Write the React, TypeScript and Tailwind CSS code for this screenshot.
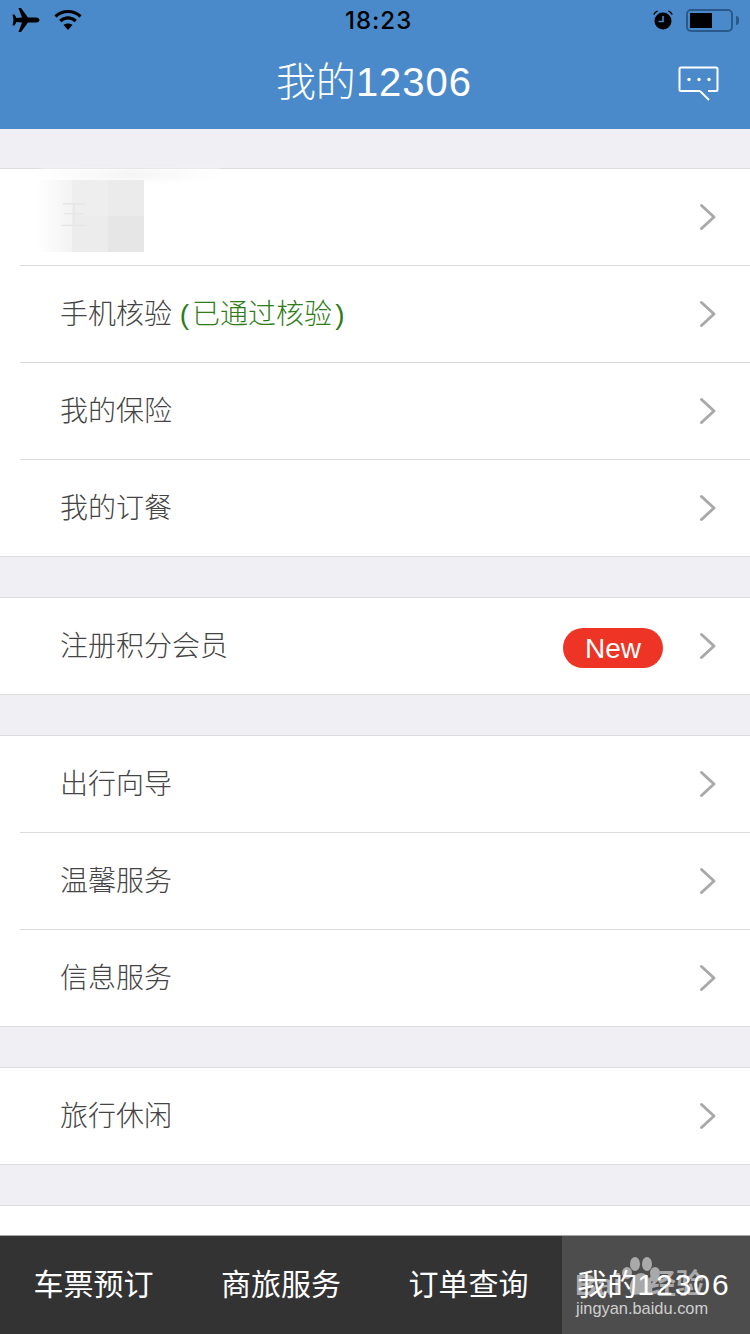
const sans = "font-['Liberation_Sans','Noto_Sans_CJK_SC',sans-serif]";

function Chevron() {
  return (
    <svg width="18" height="28" viewBox="0 0 18 28" fill="none" className="shrink-0">
      <path d="M2.5 2.5 L15 14 L2.5 25.5" stroke="#a9a9a9" strokeWidth="3" strokeLinecap="round" strokeLinejoin="round" />
    </svg>
  );
}

function Row({ children, last, right }: { children?: React.ReactNode; last?: boolean; right?: React.ReactNode }) {
  return (
    <div className="pl-5">
      <div className={`flex items-center pr-[33px] ${last ? 'h-[96px]' : 'h-[97px] border-b border-[#dcdcdc]'}`}>
        <div className="flex-1 pl-[40px] pt-[1px] text-[28px] leading-[40px] font-light text-[#444444]">{children}</div>
        {right}
        <Chevron />
      </div>
    </div>
  );
}

function Group({ children }: { children: React.ReactNode }) {
  return <div className="mb-10 border-y border-[#dcdcdc] bg-white">{children}</div>;
}

function BlurredName() {
  return (
    <div className="relative h-[96px]">
      <div className="absolute left-[40px] top-0 h-[11px] w-[180px] bg-gradient-to-r from-white via-[#f5f5f5] to-white blur-[2px]" />
      <div className="absolute left-[36px] top-[11px] h-[72px] w-[36px] bg-gradient-to-r from-white to-[#f3f3f3]" />
      <div className="absolute left-[72px] top-[11px] grid h-[72px] w-[72px] grid-cols-2 grid-rows-2">
        <div className="bg-[#eeeeee]" />
        <div className="bg-[#ebebeb]" />
        <div className="bg-[#ececec]" />
        <div className="bg-[#e6e6e6]" />
      </div>
      <span className="absolute left-[60px] top-[27px] text-[28px] leading-[40px] font-light text-[#e6e6e6] blur-[0.6px]">王</span>
    </div>
  );
}

function StatusBar() {
  return (
    <div className="relative flex h-[40px] items-center justify-between pl-3 pr-[11px] text-black">
      <div className="flex items-center gap-[14px]">
        <svg width="28" height="26" viewBox="0 0 28 26" fill="currentColor">
          <path d="M6.5 1 L9 1 L16 10.5 L24 10.5 C26.5 10.5 27.5 12 27.5 13 C27.5 14 26.5 15.5 24 15.5 L16 15.5 L9 25 L6.5 25 L10 15.5 L4.5 15 L2.5 18.5 L0.5 18.5 L1.5 13 L0.5 7.5 L2.5 7.5 L4.5 11 L10 10.5 Z" />
        </svg>
        <svg width="28" height="22" viewBox="0 0 28 22" fill="none" stroke="currentColor" strokeWidth="3.2">
          <path d="M1.5 7.5 C8.5 0.8 19.5 0.8 26.5 7.5" />
          <path d="M6.2 12 C10.8 7.8 17.2 7.8 21.8 12" />
          <path d="M14 21 L9.5 16 C12 14 16 14 18.5 16 Z" fill="currentColor" stroke="none" />
        </svg>
      </div>
      <span className="absolute left-[345px] top-[4px] font-['Inter',sans-serif] text-[24px] leading-[33px] font-medium tracking-[1px]">18:23</span>
      <div className="flex items-center gap-[13px]">
        <svg width="20" height="20" viewBox="0 0 20 20" fill="currentColor">
          <circle cx="10" cy="11" r="8.5" />
          <path d="M10 6 V11.5 H5.5" fill="none" stroke="#4a8aca" strokeWidth="1.6" />
          <path d="M0.3 4.5 C1 2.5 2.5 1 4.5 0.5 L5 1.5 C3.5 2 2 3.5 1.3 5 Z M19.7 4.5 C19 2.5 17.5 1 15.5 0.5 L15 1.5 C16.5 2 18 3.5 18.7 5 Z" />
        </svg>
        <div className="flex items-center">
          <div className="h-[23px] w-[47px] rounded-[5px] border-2 border-[#2a5a8c] p-[2px]">
            <div className="h-full w-[22px] bg-black" />
          </div>
          <div className="ml-[3px] h-[9px] w-[3px] rounded-r-sm bg-[#2a5a8c]" />
        </div>
      </div>
    </div>
  );
}

function Header() {
  return (
    <div className="h-[129px] bg-[#4a8aca]">
      <StatusBar />
      <div className="relative h-[89px] pr-[2px] text-center text-[40px] leading-[84px] font-light text-white">
        我的<span className="tracking-[1px]">12306</span>
        <svg width="42" height="36" viewBox="0 0 42 36" fill="none" stroke="white" strokeWidth="2" className="absolute right-[30px] top-[26px]">
          <path d="M22 25 H3 Q1.5 25 1.5 23.5 V3 Q1.5 1.5 3 1.5 H38 Q39.5 1.5 39.5 3 V23.5 Q39.5 25 38 25 H30" />
          <path d="M22 25 L31 34" />
          <circle cx="11" cy="13.5" r="1.7" fill="white" stroke="none" />
          <circle cx="21" cy="13.5" r="1.7" fill="white" stroke="none" />
          <circle cx="31" cy="13.5" r="1.7" fill="white" stroke="none" />
        </svg>
      </div>
    </div>
  );
}

function Watermark() {
  return (
    <>
      <span className="absolute left-[13px] top-[32px] text-[30px] leading-[34px] font-bold text-[#a9a9a9]">Bai</span>
      <svg width="44" height="42" viewBox="0 0 44 42" fill="#a9a9a9" className="absolute left-[56px] top-[20px]">
        <ellipse cx="17" cy="8" rx="5" ry="7" />
        <ellipse cx="29" cy="8" rx="5" ry="7" />
        <ellipse cx="9" cy="17" rx="5" ry="6" />
        <ellipse cx="37" cy="17" rx="5" ry="6" />
        <path d="M23 17 C30 17 36 28 34 36 C32 41 27 38 23 38 C19 38 14 41 12 36 C10 28 16 17 23 17 Z" />
      </svg>
      <span className="absolute left-[86px] top-[32px] text-[28px] leading-[34px] font-bold text-[#a9a9a9]">经验</span>
      <span className="absolute left-[14px] top-[61px] text-[16.4px] leading-[22px] text-[#cfcfcf]">jingyan.baidu.com</span>
    </>
  );
}

function TabBar() {
  const tabs = ['车票预订', '商旅服务', '订单查询'];
  return (
    <div className="absolute bottom-0 left-0 right-0 grid h-[99px] grid-cols-[187px_188px_187px_188px] border-t border-[#a8a8a8] bg-[#333333] text-[30px] text-white">
      {tabs.map((t) => (
        <div key={t} className="flex items-center justify-center pb-[2px]">
          {t}
        </div>
      ))}
      <div className="relative flex items-center justify-center bg-[#4d4d4d] pb-[2px] pr-[4px]">
        <Watermark />
        <span className="relative">
          我的<span className="tracking-[2px]">12306</span>
        </span>
      </div>
    </div>
  );
}

export default function App() {
  return (
    <div className={`relative h-[1334px] w-[750px] overflow-hidden bg-[#efeff4] ${sans}`}>
      <Header />
      <div className="pt-[39px]">
        <Group>
          <div className="pl-5">
            <div className="flex h-[97px] items-center border-b border-[#dcdcdc] pr-[33px]">
              <div className="-ml-5 flex-1">
                <BlurredName />
              </div>
              <Chevron />
            </div>
          </div>
          <Row>
            手机核验 <span className="text-[#2e7d18]">(<span className="mx-[3px]">已通过核验</span>)</span>
          </Row>
          <Row>我的保险</Row>
          <Row last>我的订餐</Row>
        </Group>
        <Group>
          <Row
            last
            right={
              <span className="mr-[36px] mt-[4px] flex h-10 w-[100px] items-center justify-center rounded-full bg-[#ee3425] pt-[1px] text-[28px] text-white">
                New
              </span>
            }
          >
            注册积分会员
          </Row>
        </Group>
        <Group>
          <Row>出行向导</Row>
          <Row>温馨服务</Row>
          <Row last>信息服务</Row>
        </Group>
        <Group>
          <Row last>旅行休闲</Row>
        </Group>
        <div className="h-[40px] border-t border-[#dcdcdc] bg-white" />
      </div>
      <TabBar />
    </div>
  );
}
